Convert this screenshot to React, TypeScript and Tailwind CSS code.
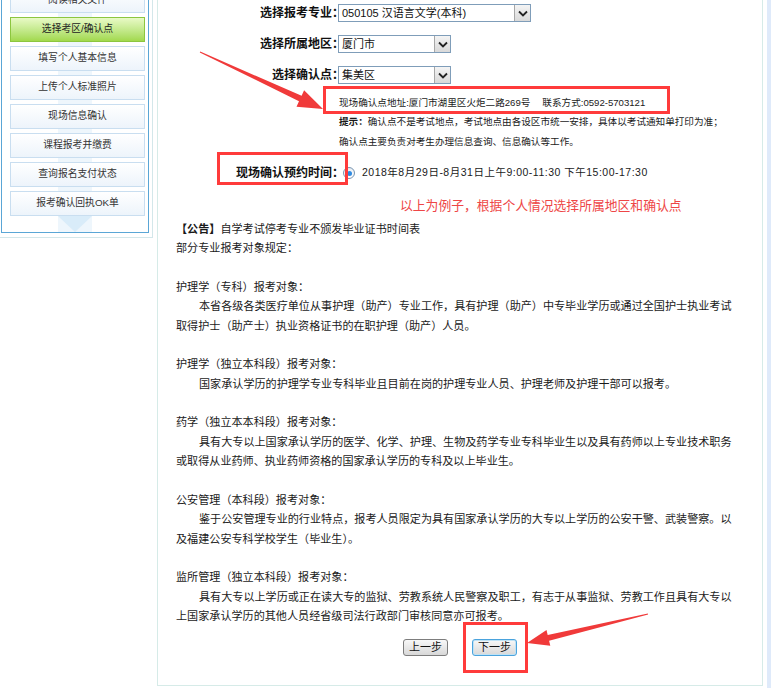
import React from "react";

const menu = [
  "阅读相关文件",
  "选择考区/确认点",
  "填写个人基本信息",
  "上传个人标准照片",
  "现场信息确认",
  "课程报考并缴费",
  "查询报名支付状态",
  "报考确认回执OK单",
];

const body: Array<[number, React.ReactNode]> = [
  [0, <><b>【公告】</b>自学考试停考专业不颁发毕业证书时间表</>],
  [0, "部分专业报考对象规定："],
  [2, ""],
  [0, "护理学（专科）报考对象："],
  [1, "本省各级各类医疗单位从事护理（助产）专业工作，具有护理（助产）中专毕业学历或通过全国护士执业考试"],
  [0, "取得护士（助产士）执业资格证书的在职护理（助产）人员。"],
  [2, ""],
  [0, "护理学（独立本科段）报考对象："],
  [1, "国家承认学历的护理学专业专科毕业且目前在岗的护理专业人员、护理老师及护理干部可以报考。"],
  [2, ""],
  [0, "药学（独立本本科段）报考对象："],
  [1, "具有大专以上国家承认学历的医学、化学、护理、生物及药学专业专科毕业生以及具有药师以上专业技术职务"],
  [0, "或取得从业药师、执业药师资格的国家承认学历的专科及以上毕业生。"],
  [2, ""],
  [0, "公安管理（本科段）报考对象："],
  [1, "鉴于公安管理专业的行业特点，报考人员限定为具有国家承认学历的大专以上学历的公安干警、武装警察。以"],
  [0, "及福建公安专科学校学生（毕业生）。"],
  [2, ""],
  [0, "监所管理（独立本科段）报考对象："],
  [1, "具有大专以上学历或正在读大专的监狱、劳教系统人民警察及职工，有志于从事监狱、劳教工作且具有大专以"],
  [0, "上国家承认学历的其他人员经省级司法行政部门审核同意亦可报考。"],
];

function Select({ wide, text }: { wide?: boolean; text: string }) {
  return (
    <div
      className={
        (wide ? "w-[193px] " : "w-[113px] ") +
        "h-[18px] flex items-stretch border border-[#7f9db9] bg-white"
      }
    >
      <div className="flex-1 pl-[3px] text-[11px] leading-[16px] text-[#111] whitespace-nowrap overflow-hidden">
        {text}
      </div>
      <div className="w-[16px] flex items-center justify-center border-l border-[#a7a7a7] bg-linear-to-b from-[#f4f4f4] to-[#d9d9d9]">
        <svg width="10" height="7" viewBox="0 0 10 7">
          <path d="M1 1.5 L5 5.5 L9 1.5" fill="none" stroke="#222" strokeWidth="1.8" />
        </svg>
      </div>
    </div>
  );
}

function Label({ children }: { children: React.ReactNode }) {
  return (
    <div className="w-[186px] -mr-[6px] shrink-0 text-right text-[12px] font-bold text-[#111] whitespace-nowrap">
      {children}
    </div>
  );
}

export default function App() {
  return (
    <div className="relative w-[771px] h-[688px] overflow-hidden bg-white font-['Liberation_Sans','Noto_Sans_CJK_SC',sans-serif] text-[#1a1a1a]">
      <div className="flex items-start">
        {/* sidebar */}
        <div className="w-[153px] -mt-[12px] pl-[1px] pr-[3px] pb-[4px] border-r border-b border-[#d3e7ea]">
          <div className="w-[148px] border-l border-r border-b border-[#5aa6d6] pl-[8px] pr-[3px] bg-[linear-gradient(to_right,transparent_56px,#eef6fc_56px,#eef6fc_90px,transparent_90px)]">
            <div className="flex flex-col gap-[4px]">
              {menu.map((m, i) => (
                <div
                  key={m}
                  className={
                    i === 1
                      ? "w-[135px] h-[25px] flex items-center justify-center text-[9.8px] text-[#222] border border-[#8cc63f] bg-linear-to-b from-[#e9fac6] to-[#a2d94c]"
                      : "w-[135px] h-[25px] flex items-center justify-center text-[9.8px] text-[#333] border border-[#c9def0] bg-linear-to-b from-white to-[#edf4fb]"
                  }
                >
                  {m}
                </div>
              ))}
            </div>
            <div className="ml-[48px] w-0 h-0 border-l-[17px] border-r-[17px] border-t-[16px] border-l-transparent border-r-transparent border-t-[#d9ecf9]" />
          </div>
        </div>

        {/* main */}
        <div className="ml-[4px] w-[606px] h-[686px] border-l border-r border-b border-[#d6ebe8] pt-[4px]">
          <div className="flex items-center h-[18px]">
            <Label>选择报考专业：</Label>
            <Select wide text="050105 汉语言文学(本科)" />
          </div>
          <div className="flex items-center h-[18px] mt-[13px]">
            <Label>选择所属地区：</Label>
            <Select text="厦门市" />
          </div>
          <div className="flex items-center h-[18px] mt-[13px]">
            <Label>选择确认点：</Label>
            <Select text="集美区" />
          </div>

          <div className="ml-[181px] mt-[12px] h-[14px] leading-[14px] text-[9.6px] whitespace-nowrap">
            现场确认点地址:厦门市湖里区火炬二路269号<span className="ml-[12px]">联系方式:0592-5703121</span>
          </div>
          <div className="ml-[181px] mt-[2px] h-[20px] leading-[20px] text-[9.6px] whitespace-nowrap">
            <b>提示：</b>确认点不是考试地点，考试地点由各设区市统一安排，具体以考试通知单打印为准；
          </div>
          <div className="ml-[181px] h-[20px] leading-[20px] text-[9.6px] whitespace-nowrap">
            确认点主要负责对考生办理信息查询、信息确认等工作。
          </div>

          <div className="flex items-center h-[20px] mt-[11px]">
            <Label>现场确认预约时间：</Label>
            <div className="ml-[5px] w-[12px] h-[12px] rounded-full border border-[#7894b0] bg-linear-to-b from-[#e8eef4] to-white flex items-center justify-center">
              <div className="w-[5px] h-[5px] rounded-full bg-[#2f8ae0]" />
            </div>
            <div className="ml-[7px] text-[10.5px] tracking-[0.5px] whitespace-nowrap">
              2018年8月29日-8月31日上午9:00-11:30 下午15:00-17:30
            </div>
          </div>

          <div className="ml-[242px] mt-[14px] h-[18px] leading-[18px] text-[12.8px] text-[#ee4646] whitespace-nowrap">
            以上为例子，根据个人情况选择所属地区和确认点
          </div>

          <div className="mt-[5px] pl-[18px] text-[11.1px]">
            {body.map(([k, t], i) => (
              <div
                key={i}
                className={
                  k === 1
                    ? "h-[19.35px] leading-[19.35px] whitespace-nowrap pl-[23px]"
                    : "h-[19.35px] leading-[19.35px] whitespace-nowrap"
                }
              >
                {t}
              </div>
            ))}
          </div>

          <div className="mt-[13px] flex justify-center gap-[24px]">
            <div className="w-[45px] h-[17px] flex items-center justify-center text-[11px] text-[#111] rounded-[3px] border border-[#7d7d7d] bg-linear-to-b from-[#f8f8f8] to-[#d8d8d8]">
              上一步
            </div>
            <div className="w-[45px] h-[17px] flex items-center justify-center text-[11px] text-[#111] rounded-[3px] border border-[#4aa3dd] bg-linear-to-b from-[#f8f8f8] to-[#d8d8d8] shadow-[inset_0_0_0_1px_#bfe2f5]">
              下一步
            </div>
          </div>
        </div>

        <div className="ml-[4px] w-[4px] h-[688px] bg-[#dfeafa]" />
      </div>

      {/* annotations */}
      <div className="absolute left-[323px] top-[86px] w-[347px] h-[28px] border-[3px] border-[#ff3b3b]" />
      <div className="absolute left-[217px] top-[152px] w-[131px] h-[33px] border-[3px] border-[#ff3b3b]" />
      <div className="absolute left-[463px] top-[622px] w-[65px] h-[51px] border-[3px] border-[#ff3b3b]" />
      <svg className="absolute left-0 top-0 pointer-events-none" width="771" height="688" viewBox="0 0 771 688">
        <polygon
          fill="#f03a3a"
          points="200.2,51.55 301.6,95.8 304.1,90.3 323,109 296.5,106.7 299.0,101.2 199.8,52.45"
        />
        <polygon
          fill="#f03a3a"
          points="647.88,613.51 547.7,635.0 546.5,630.1 527,643 550.3,645.7 549.1,640.8 648.12,614.49"
        />
      </svg>
    </div>
  );
}
